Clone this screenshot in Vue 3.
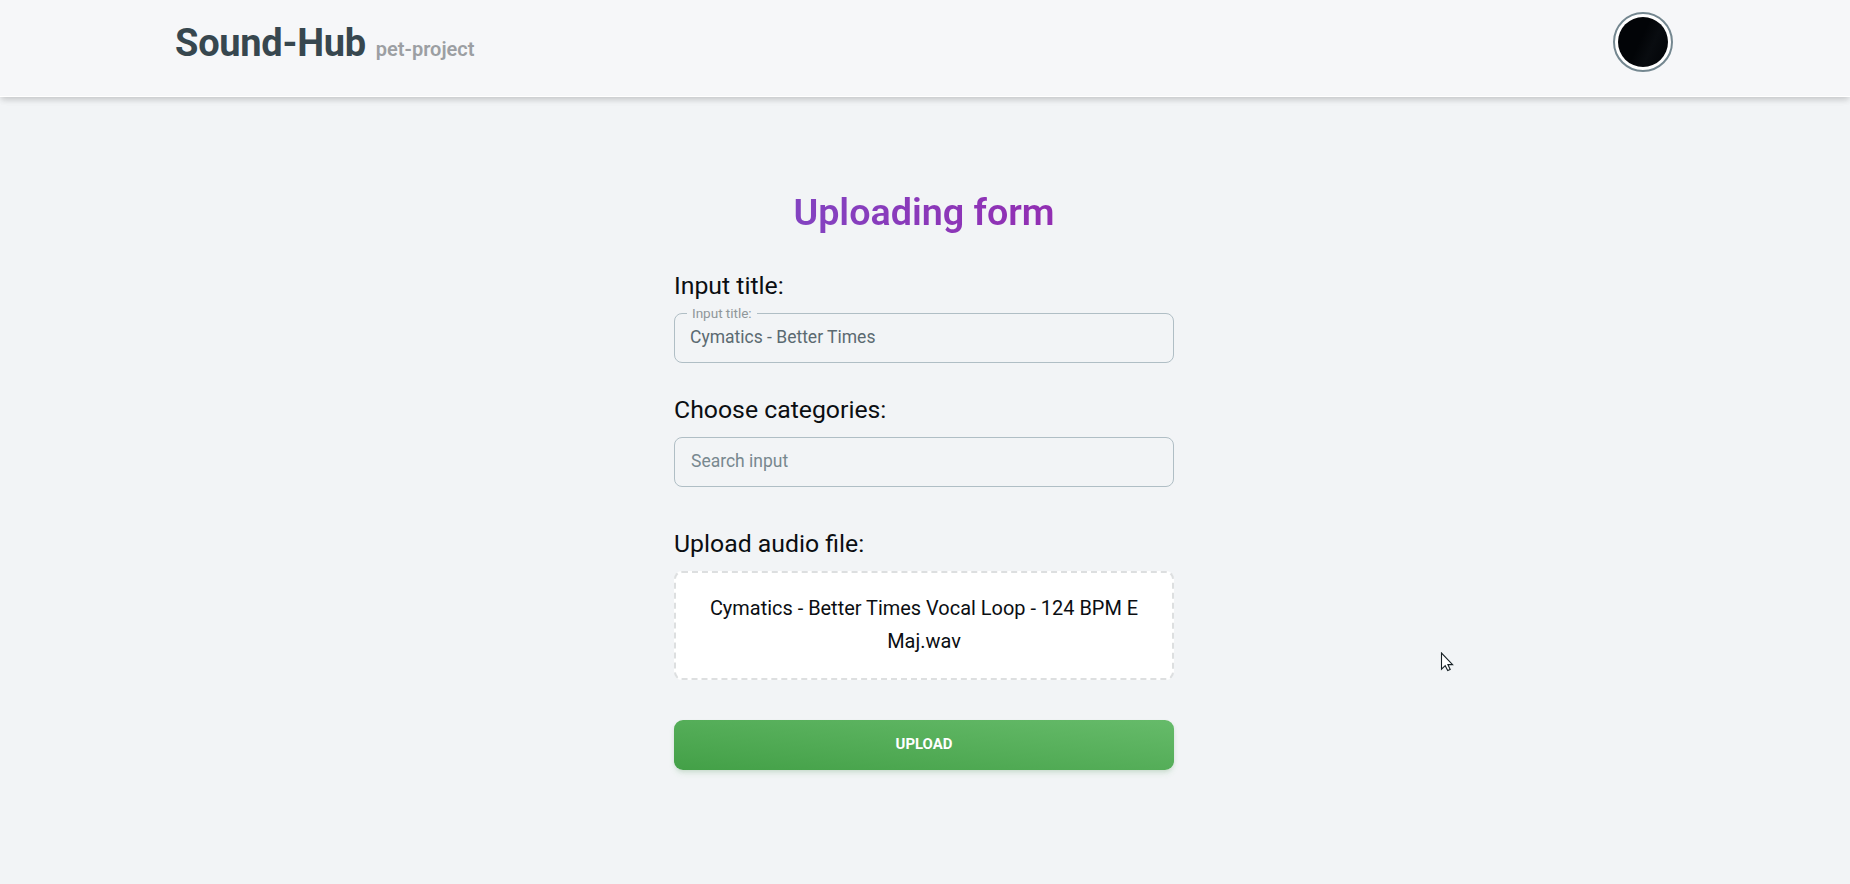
<script setup>
import { ref } from 'vue'
const title = ref('Cymatics - Better Times')
const search = ref('')
</script>

<template>
  <div class="page">
    <header class="header">
      <div class="bar">
        <div class="brand">
          <span class="name">Sound-Hub</span>
          <span class="tag">pet-project</span>
        </div>
        <div class="avatar"><div class="photo"></div></div>
      </div>
    </header>
    <main class="form">
      <h1 class="heading"><span>Uploading form</span></h1>
      <label class="label l1">Input title:</label>
      <div class="field outlined">
        <input v-model="title" />
        <span class="legend">Input title:</span>
      </div>
      <label class="label l2">Choose categories:</label>
      <div class="field"><input v-model="search" class="search" placeholder="Search input" /></div>
      <label class="label l3">Upload audio file:</label>
      <div class="drop"><span>Cymatics - Better Times Vocal Loop - 124 BPM E Maj.wav</span></div>
      <button class="upload">Upload</button>
    </main>
    <svg class="cursor" width="14" height="21" viewBox="0 0 14 21">
      <path d="M1.5 1V17.2L5.2 13.7L7.7 18.6L10.2 17.4L7.9 12.6H12.6Z" fill="#fff" stroke="#182126" stroke-width="1.1" />
    </svg>
  </div>
</template>

<style>
body { margin: 0; background: #f2f4f6; }
</style>
<style scoped>
.page { position: relative; height: 884px; overflow: hidden; background: #f2f4f6; font-family: Roboto, sans-serif; color: #0b0e12; }
.header { box-sizing: border-box; height: 97px; padding-right: 2px; background: #f6f7f9; border-bottom: 1px solid #fff; box-shadow: 0 4px 6px -1px rgba(0,0,0,.1), 0 2px 8px -1px rgba(0,0,0,.12); }
.bar { box-sizing: border-box; width: 1500px; height: 84px; margin: 0 auto; padding: 0 1px 0 1px; display: flex; align-items: center; justify-content: space-between; }
.brand { display: flex; align-items: baseline; gap: 10px; padding-top: 2px; }
.name { font-size: 38px; font-weight: 700; line-height: 46px; letter-spacing: -.27px; color: #37474f; }
.tag { font-size: 20px; font-weight: 600; color: #9c9fa3; }
.avatar { box-sizing: border-box; width: 60px; height: 60px; padding: 3px; border: 2px solid #748790; border-radius: 50%; background: #fff; }
.photo { width: 50px; height: 50px; border-radius: 50%; background: linear-gradient(115deg, #020407 45%, #090c10 65%, #010306); }
.form { width: 500px; margin: 0 auto; padding: 92px 2px 0 0; display: flex; flex-direction: column; }
.heading { margin: 0; text-align: center; font-size: 37.7px; line-height: 47px; padding-bottom: 1px; font-weight: 600; }
.heading span { background: linear-gradient(90deg, #8343c1, #922eb2); -webkit-background-clip: text; background-clip: text; color: transparent; }
.label { font-size: 24.8px; font-weight: 400; line-height: 32px; white-space: nowrap; }
.l1 { margin-top: 33px; }
.l2 { margin-top: 31px; }
.l3 { margin-top: 41px; }
.field { position: relative; box-sizing: border-box; height: 50px; border: 1px solid #b0bec5; border-radius: 8px; margin-top: 11px; }
.field input { display: block; box-sizing: border-box; width: 100%; height: 48px; padding: 0 15px 2px; border: 0; outline: 0; background: transparent; font: 400 17.5px/24px Roboto, sans-serif; color: #5b6a71; }
.field .search { padding-left: 16px; }
.field input::placeholder { color: #78888f; opacity: 1; }
.legend { position: absolute; left: 12px; top: -9px; padding: 0 5px; background: #f2f4f6; font-size: 13.6px; line-height: 16px; letter-spacing: -.05px; color: #90979a; }
.drop { box-sizing: border-box; height: 109px; margin-top: 11px; padding: 19px 28px; border: 2px dashed #dddfe0; border-radius: 8px; background: #fff; text-align: center; font-size: 19.95px; font-weight: 400; line-height: 33px; }
.upload { height: 50px; margin-top: 40px; padding: 0 0 2px; border: 0; border-radius: 9px; background: linear-gradient(to top right, #43a047, #66bb6a); box-shadow: 0 4px 6px -1px rgba(76,175,80,.15), 0 2px 4px -1px rgba(76,100,80,.15); color: #fff; font: 700 14.9px/20px Roboto, sans-serif; text-transform: uppercase; }
.cursor { position: absolute; left: 1440px; top: 652px; }
</style>
